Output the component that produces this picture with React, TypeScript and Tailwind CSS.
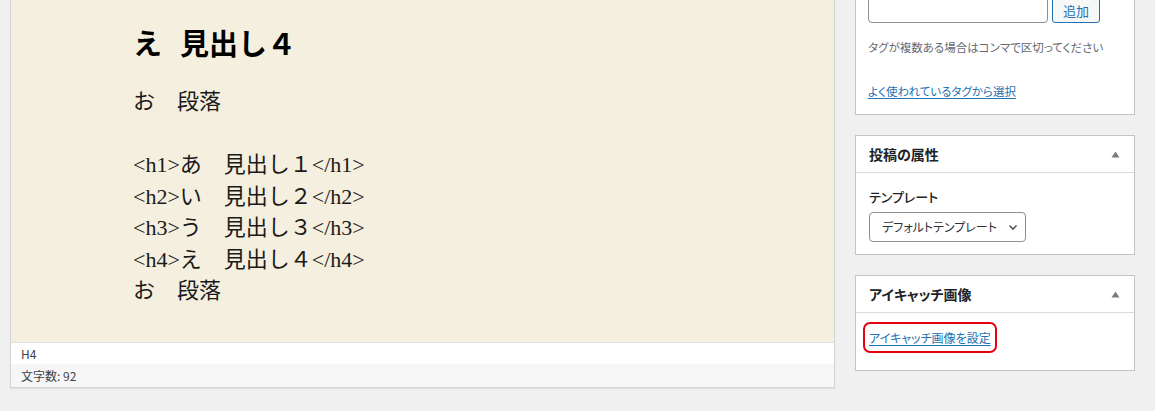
import React from "react";

const jp = "font-['Noto_Sans_CJK_JP',sans-serif]";

const Caret = () => (
  <svg width="9" height="7" viewBox="0 0 9 7" className="shrink-0">
    <polygon points="4.5,0.5 8.5,6.5 0.5,6.5" fill="#787c82" />
  </svg>
);

const MetaBox: React.FC<{ title: string; children: React.ReactNode; className?: string }> = ({
  title,
  children,
  className,
}) => (
  <div className={`bg-white border border-[#c3c4c7] ${className ?? ""}`}>
    <div className="h-[37px] flex items-center justify-between pl-[13px] pr-[14px] border-b border-[#dcdcde]">
      <span className="text-[14px] leading-[20px] font-bold text-[#1d2327] [font-feature-settings:'palt']">{title}</span>
      <Caret />
    </div>
    {children}
  </div>
);

export default function App() {
  const lines = [
    "<h1>あ　見出し１</h1>",
    "<h2>い　見出し２</h2>",
    "<h3>う　見出し３</h3>",
    "<h4>え　見出し４</h4>",
  ];

  return (
    <div className={`w-[1155px] h-[411px] bg-[#f0f0f1] flex overflow-hidden ${jp}`}>
      {/* editor */}
      <div className="ml-[10px] w-[825px] h-[388px] flex flex-col border-l border-r border-b border-[#d4d4d6] shadow-[0_1px_1px_rgba(0,0,0,0.06)]">
        <div className="flex-1 bg-[#f5efe0] pl-[122px] pt-[22px] border-b border-[#e2e2e2]">
          <h4 className="text-[29px] leading-[40px] font-bold text-black">
            <span className="mr-[18px]">え</span>見出し４
          </h4>
          <div className="mt-[24px] font-['Liberation_Serif','Noto_Sans_CJK_JP',serif] text-[22px] leading-[31.5px] text-[#1a1a1a]">
            <p>お　段落</p>
            <p>&nbsp;</p>
            {lines.map((l) => (
              <p key={l}>{l}</p>
            ))}
            <p>お　段落</p>
          </div>
        </div>
        <div className="h-[21px] bg-white pl-[10px] flex items-center text-[12px] text-[#3c434a]">H4</div>
        <div className="h-[23px] bg-[#f6f6f6] pl-[10px] flex items-center text-[12px] text-[#3c434a]">
          文字数: 92
        </div>
      </div>

      {/* sidebar */}
      <div className="ml-[20px] w-[280px] -mt-[8px] flex flex-col gap-[20px]">
        <div className="bg-white border border-[#c3c4c7] border-t-0 pl-[12px] pr-[12px] pb-[14px]">
          <div className="flex gap-[4px]">
            <div className="w-[180px] h-[31px] border border-[#8c8f94] rounded-[4px] bg-white" />
            <button className="w-[48px] h-[31px] border border-[#2271b1] rounded-[3px] bg-[#f6f7f7] text-[#2271b1] text-[13px] leading-[18px] pt-[6px]">
              追加
            </button>
          </div>
          <p className="mt-[15px] whitespace-nowrap text-[11.5px] leading-[18px] text-[#646970] [font-feature-settings:'palt']">
            タグが複数ある場合はコンマで区切ってください
          </p>
          <a className="block mt-[26px] text-[11.5px] leading-[18px] text-[#2271b1] underline underline-offset-2 [font-feature-settings:'palt']">
            よく使われているタグから選択
          </a>
        </div>

        <MetaBox title="投稿の属性">
          <div className="pl-[13px] pt-[15px] pb-[12px]">
            <p className="text-[13px] leading-[18px] font-medium text-[#1d2327] [font-feature-settings:'palt']">テンプレート</p>
            <div className="mt-[6px] w-[157px] h-[30px] border border-[#8c8f94] rounded-[4px] flex items-center justify-between pl-[12px] pr-[6px] whitespace-nowrap text-[12px] text-[#2c3338] [font-feature-settings:'palt']">
              <span>デフォルトテンプレート</span>
              <svg width="12" height="12" viewBox="0 0 12 12" className="shrink-0">
                <path d="M2.5 4.5 L6 8 L9.5 4.5" stroke="#50575e" strokeWidth="1.6" fill="none" />
              </svg>
            </div>
          </div>
        </MetaBox>

        <MetaBox title="アイキャッチ画像">
          <div className="pl-[7px] pt-[9px] pb-[17px]">
            <div className="inline-flex items-center h-[31px] px-[4px] border-2 border-[#e60012] rounded-[7px]">
              <a className="text-[12px] leading-[18px] text-[#2271b1] underline underline-offset-2 [font-feature-settings:'palt']">
                アイキャッチ画像を設定
              </a>
            </div>
          </div>
        </MetaBox>
      </div>
    </div>
  );
}
